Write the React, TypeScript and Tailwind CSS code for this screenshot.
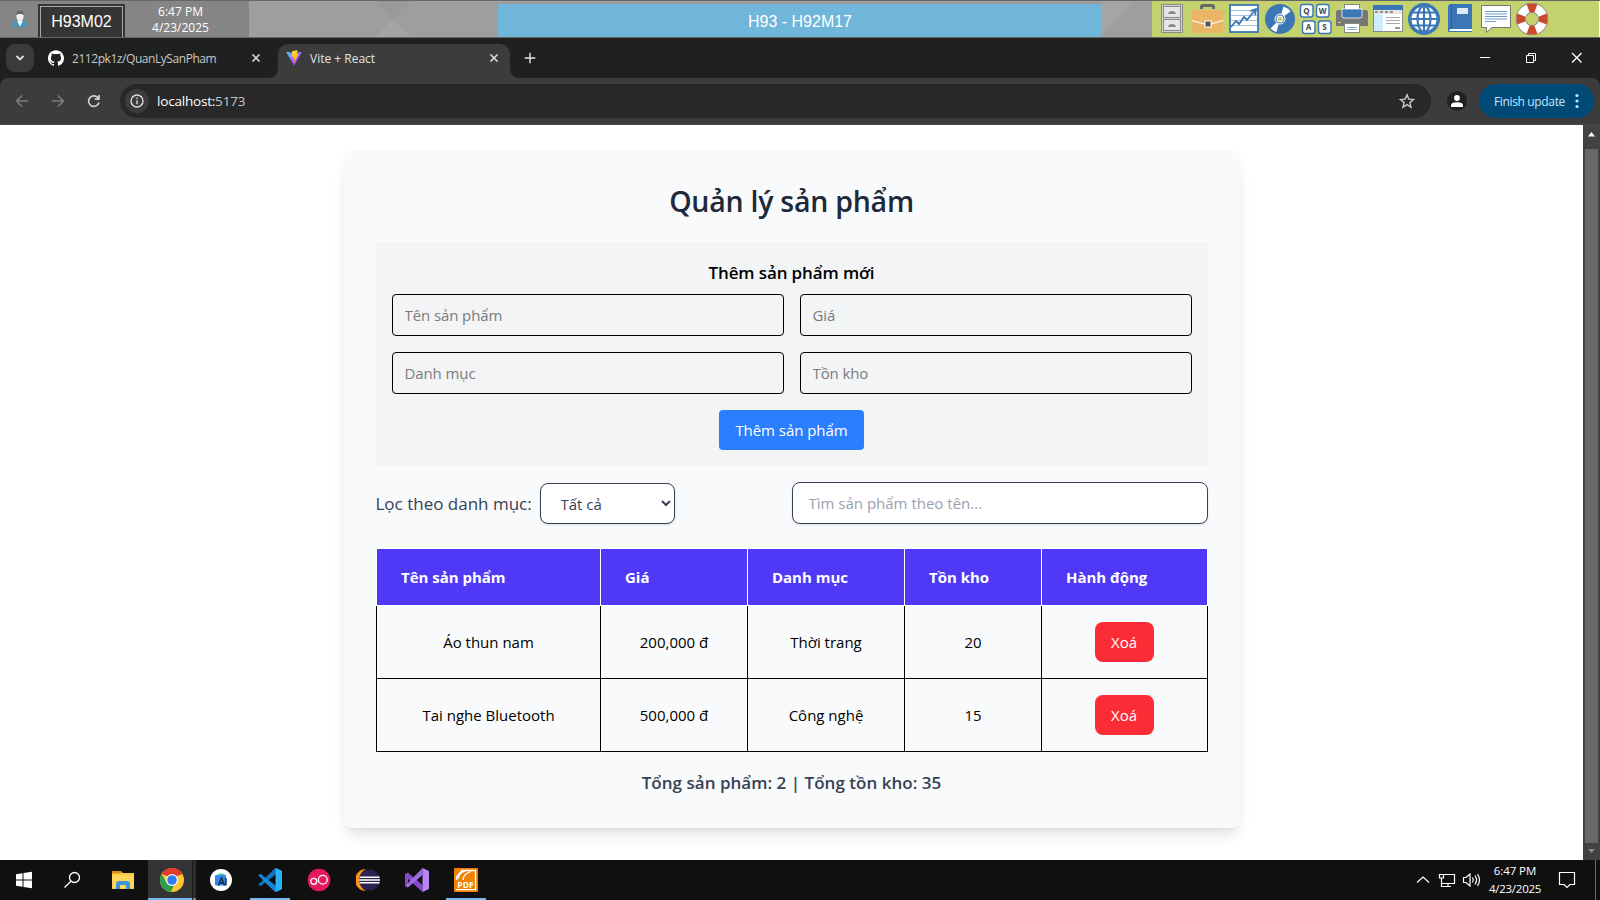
import type { ReactNode } from 'react';
import { SiGithub } from 'react-icons/si';

const KEYS: [number, number, string][] = [
  [2, 4, 'Q'],
  [18, 4, 'W'],
  [4, 20.5, 'A'],
  [20, 20.5, 'S'],
];

function ToolIcon({ children }: { children: ReactNode }) {
  return (
    <svg viewBox="0 1 36 36" className="h-9 w-9 shrink-0">
      {children}
    </svg>
  );
}

function ToolIcons() {
  return (
    <div className="flex h-9 w-[447px] bg-[#c3d26d] pl-0.5">
      <ToolIcon>
        <rect x="7.5" y="4.5" width="21" height="28" fill="#d0d0d0" stroke="#8b8b8b" />
        <rect x="9.5" y="6.5" width="17" height="11" fill="#e6e6e6" stroke="#8b8b8b" />
        <rect x="9.5" y="19.5" width="17" height="11" fill="#e6e6e6" stroke="#8b8b8b" />
        <path d="M14 14c0-4 8-4 8 0zM14 27c0-4 8-4 8 0z" fill="#8b8b8b" />
      </ToolIcon>
      <ToolIcon>
        <path d="M11.500 9V7q0-1.500 1.500-1.500h9q1.500 0 1.500 1.500v2" fill="none" stroke="#666" strokeWidth="3" />
        <rect x="2" y="10" width="31" height="23" fill="#ebb566" />
        <path d="M2 20.500L14 24h7l12-3.500" fill="none" stroke="#fff" strokeWidth="1.200" />
        <rect x="15" y="21" width="6" height="6" fill="#555" stroke="#fff" />
      </ToolIcon>
      <ToolIcon>
        <rect x="4" y="5" width="28" height="27" fill="#fff" stroke="#3b77b5" strokeWidth="1.800" />
        <path d="M5 10.500h26M5 15.500h26M5 20.500h26M5 25.500h26" stroke="#a8c4de" />
        <path d="M5 27l5-6 3 3 5-7 3 3 8-10M24 11l6-2-1 6" fill="none" stroke="#3b77b5" strokeWidth="1.800" />
      </ToolIcon>
      <ToolIcon>
        <circle cx="18" cy="19" r="15" fill="#3b77b5" />
        <path d="M18 19L21.500 6.500q4.500 1.500 7 5zM18 19L8.500 28.500q3 3 6 3.500z" fill="#fff" />
        <circle cx="18" cy="19" r="5" fill="#3b77b5" stroke="#fff" strokeWidth="1" />
        <circle cx="18" cy="19" r="2.800" fill="#c3d26d" stroke="#fff" strokeWidth="1.200" />
      </ToolIcon>
      <ToolIcon>
        {KEYS.map(([x, y, k]) => (
          <g key={k}>
            <rect x={x + 0.5} y={y + 0.5} width="12.500" height="12.500" rx="2.500" fill="#fff" stroke="#3b77b5" strokeWidth="1.400" />
            <text x={x + 6.5} y={y + 9.5} textAnchor="middle" className="fill-[#444] font-['Open_Sans',sans-serif] text-[8px] font-bold">
              {k}
            </text>
          </g>
        ))}
      </ToolIcon>
      <ToolIcon>
        <path d="M2 12q0-2 2-2h28q2 0 2 2v14H2z" fill="#777" />
        <rect x="10.500" y="4.500" width="15" height="8" fill="#fff" stroke="#888" />
        <path d="M8 9h20v7q0 2-2 2H10q-2 0-2-2z" fill="#3b77b5" stroke="#fff" strokeWidth=".8" />
        <rect x="10.500" y="23.500" width="15" height="9" fill="#fff" stroke="#888" />
        <path d="M13 27.500h10M13 29.500h10" stroke="#8fb0d0" />
        <path d="M4 22.500h3" stroke="#c3d26d" />
      </ToolIcon>
      <ToolIcon>
        <rect x="3.500" y="5.500" width="29" height="26" fill="#fff" stroke="#888" />
        <rect x="3" y="5" width="30" height="5" fill="#3b77b5" />
        <rect x="4" y="10" width="28" height="4" fill="#e6e6e6" />
        <path d="M5 12h3M10 12h3M15 12h3M20 12h3" stroke="#777" strokeWidth="1.600" />
        <rect x="4" y="14.500" width="9" height="16.500" fill="#cdebfd" />
        <path d="M16 17.500h14M16 20.500h14M16 23.500h14" stroke="#aaa" />
        <path d="M25 28h5" stroke="#999" strokeWidth="2" />
      </ToolIcon>
      <ToolIcon>
        <circle cx="18" cy="19" r="16" fill="#3b77b5" />
        <circle cx="18" cy="19" r="12.500" fill="#fff" />
        <g fill="none" stroke="#3b77b5" strokeWidth="2.200">
          <ellipse cx="18" cy="19" rx="6.500" ry="13" />
          <path d="M18 6v26M5 19h26M7 12.500h22M7 25.500h22" />
        </g>
      </ToolIcon>
      <ToolIcon>
        <path d="M8 4h22v28H6V6z" fill="#3b77b5" />
        <path d="M9.500 4v25" stroke="#2d5f95" />
        <path d="M7 31l1.500-2H30v2z" fill="#fff" />
        <rect x="15" y="8" width="11" height="6" fill="#dfe9f3" />
      </ToolIcon>
      <ToolIcon>
        <path d="M3.500 5.500h29v22H14l-5.500 5v-5h-5z" fill="#fff" stroke="#777" />
        <path d="M7 11.500h22M7 14h22M7 16.500h22M7 19h22M7 21.500h11" stroke="#6f9dcb" />
      </ToolIcon>
      <ToolIcon>
        <circle cx="18" cy="19" r="11.200" fill="none" stroke="#777" strokeWidth="10" />
        <circle cx="18" cy="19" r="11.200" fill="none" stroke="#fff" strokeWidth="8.600" />
        <circle cx="18" cy="19" r="11.200" fill="none" stroke="#cb4a2e" strokeWidth="8.800" pathLength="80" strokeDasharray="9 11" strokeDashoffset="4.500" />
      </ToolIcon>
    </div>
  );
}

function SessionBar() {
  return (
    <div className="flex h-[38px] shrink-0 border-t border-b border-[#666]">
      <div className="flex h-full w-[249px] bg-[#858585]">
        <div className="flex w-[38px] items-center justify-center pl-0.5">
          <svg viewBox="0 0 16 18" className="h-[18px] w-4">
            <path d="M0 17q0-6 5-6.500h6q5 .5 5 6.500z" fill="#4796bd" />
            <path d="M5 10.500L8 16.500l3-6z" fill="#fff" />
            <ellipse cx="8" cy="6" rx="3.600" ry="4.500" fill="#f1f1f1" />
            <path d="M4 5q0-4.500 4-4.500T12 5q-4-2-8 0z" fill="#666" />
          </svg>
        </div>
        <div className="mt-[3px] w-[87px] bg-[#353535] p-0.5 pb-0">
          <div className="flex h-full items-center justify-center border border-b-0 border-[#a8a8a8] font-['Liberation_Sans',sans-serif] text-base leading-none text-white">
            H93M02
          </div>
        </div>
        <div className="flex flex-1 flex-col items-center pt-[3px] pr-[13px] text-xs leading-4 text-white">
          <span>6:47 PM</span>
          <span>4/23/2025</span>
        </div>
      </div>
      <div className="flex h-9 w-[903px] bg-[#9e9e9e]">
        <div className="flex w-[249px]">
          <svg viewBox="0 0 249 36" className="h-9 w-[249px]">
            <path d="M126 0h36l-18 18z" fill="#999" />
            <path d="M144 18l18 18h-36z" fill="#a4a4a4" />
          </svg>
        </div>
        <div className="mt-[3px] flex h-[33px] w-[604px] items-center justify-center bg-[#70b6da] pt-0.5 font-['Liberation_Sans',sans-serif] text-base text-white">
          H93 - H92M17
        </div>
        <svg viewBox="0 0 50 36" className="h-9 w-[50px]">
          <path d="M0 0h31L0 34z" fill="#a5a5a5" />
        </svg>
      </div>
      <ToolIcons />
    </div>
  );
}

function CloseX({ className }: { className: string }) {
  return (
    <svg viewBox="0 0 10 10" className={className} fill="none" stroke="currentColor">
      <path d="M1.500 1.500l7 7M8.500 1.500l-7 7" strokeWidth="1.500" />
    </svg>
  );
}

function TabStrip() {
  return (
    <div className="flex h-10 shrink-0 bg-[#1f2120] text-[#e3e3e3]">
      <div className="flex w-[38px] pt-1.5 pl-1.5">
        <div className="flex h-7 w-7 items-center justify-center rounded-[9px] bg-[#3a3b3b]">
          <svg viewBox="0 0 10 10" className="h-2.5 w-2.5" fill="none" stroke="currentColor" strokeWidth="1.800">
            <path d="M1.500 3L5 6.500 8.500 3" />
          </svg>
        </div>
      </div>
      <div className="flex h-10 w-[230px] items-center pl-2.5">
        <SiGithub className="h-4 w-4 text-white" />
        <span className="mt-0.5 ml-2 text-xs tracking-[-0.44px] text-[#c7c7c7]">2112pk1z/QuanLySanPham</span>
        <div className="flex-1" />
        <CloseX className="mr-[7px] h-2.5 w-2.5" />
      </div>
      <div className="flex items-end">
        <svg viewBox="0 0 10 10" className="h-2.5 w-2.5">
          <path d="M10 0v10H0Q10 10 10 0z" fill="#3c3c3c" />
        </svg>
        <div className="flex h-[34px] w-[232px] items-center rounded-t-[10px] bg-[#3c3c3c] pr-[11px] pb-1.5 pl-2">
          <svg viewBox="0 0 410 404" className="h-4 w-4">
            <defs>
              <linearGradient id="shield" x1="6" y1="33" x2="235" y2="344" gradientUnits="userSpaceOnUse">
                <stop stopColor="#41D1FF" />
                <stop offset="1" stopColor="#BD34FE" />
              </linearGradient>
              <linearGradient id="bolt" x1="194" y1="9" x2="236" y2="293" gradientUnits="userSpaceOnUse">
                <stop stopColor="#FFEA83" />
                <stop offset=".08" stopColor="#FFDD35" />
                <stop offset="1" stopColor="#FFA800" />
              </linearGradient>
            </defs>
            <path fill="url(#shield)" d="M399.641 59.525l-183.998 329.020c-3.799 6.793-13.559 6.833-17.415.073L10.582 59.556C6.380 52.190 12.680 43.267 21.028 44.759l184.195 32.924c1.175.21 2.378.208 3.553-.006l180.343-32.870c8.320-1.517 14.649 7.337 10.522 14.718z" />
            <path fill="url(#bolt)" d="M292.965 1.574L156.801 28.255c-2.238.439-3.910 2.333-4.045 4.609l-8.376 141.464c-.197 3.332 2.863 5.918 6.115 5.168l37.910-8.749c3.547-.818 6.752 2.306 6.023 5.873l-11.263 55.153c-.758 3.712 2.727 6.886 6.352 5.785l23.415-7.114c3.630-1.102 7.118 2.081 6.350 5.796l-17.899 86.633c-1.120 5.419 6.088 8.374 9.094 3.728l2.008-3.103 110.954-221.428c1.858-3.707-1.346-7.935-5.418-7.150l-39.022 7.532c-3.667.707-6.787-2.708-5.752-6.296l25.469-88.291c1.036-3.594-2.095-7.012-5.766-6.293z" />
          </svg>
          <span className="mt-0.5 ml-2 text-xs">Vite + React</span>
          <div className="flex-1" />
          <CloseX className="h-2.5 w-2.5" />
        </div>
        <svg viewBox="0 0 10 10" className="h-2.5 w-2.5">
          <path d="M0 0v10h10Q0 10 0 0z" fill="#3c3c3c" />
        </svg>
      </div>
      <svg viewBox="0 0 20 20" className="mt-2.5 h-5 w-5" stroke="currentColor" strokeWidth="1.400">
        <path d="M10 4.700v10.600M4.700 10h10.600" />
      </svg>
      <div className="flex-1" />
      <svg viewBox="0 0 120 40" className="h-10 w-[120px]" fill="none" stroke="#fff">
        <path d="M0 19.500h10M46.500 17.500h7v7h-7zM48.500 17.500v-2h7v7h-2" />
        <path d="M92 15l9.500 9.500M101.500 15L92 24.500" strokeWidth="1.300" />
      </svg>
    </div>
  );
}

function AddressBar() {
  return (
    <div className="flex h-[47px] shrink-0 bg-[#1f2120]">
      <div className="flex h-[47px] w-full items-center rounded-t-[8px] border-b border-[#464646] bg-[#3c3c3c]">
        <svg viewBox="0 0 120 34" className="h-[34px] w-[120px]" fill="none" strokeWidth="1.600">
          <path d="M28 17H17M22 11.500L16.500 17l5.500 5.500M52 17h11M58 11.500l5.500 5.500-5.500 5.500" stroke="#7c7c7c" />
          <path d="M98.500 14.500A5.300 5.300 0 1 0 99 18.500M99 11v4.200h-4.200" stroke="#d0d0d0" strokeWidth="1.700" />
        </svg>
        <div className="flex h-[34px] w-[1311px] items-center rounded-full bg-[#282828] pr-4 pl-[5px]">
          <div className="flex h-6 w-6 items-center justify-center rounded-full bg-[#3c3c3c]">
            <svg viewBox="0 0 14 14" className="h-3.5 w-3.5" fill="none" stroke="#e3e3e3" strokeWidth="1.300">
              <circle cx="7" cy="7" r="6" />
              <path d="M7 6.200v4M7 3.600v1.400" />
            </svg>
          </div>
          <span className="ml-2 text-[13.500px] tracking-[-0.2px] text-[#c7c7c7]">
            <span className="text-white">localhost:</span>5173
          </span>
          <div className="flex-1" />
          <svg viewBox="0 0 16 16" className="h-4 w-4" fill="none" stroke="#c7c7c7" strokeWidth="1.400">
            <path d="M8 1.800l1.800 4.300 4.700.4-3.600 3.100 1.100 4.600L8 11.700l-4 2.500 1.100-4.600-3.600-3.100 4.700-.4z" />
          </svg>
        </div>
        <div className="ml-4 flex h-5 w-5 items-center justify-center rounded-full bg-[#1f2020]">
          <svg viewBox="0 0 12 12" className="h-3 w-3 fill-white">
            <circle cx="6" cy="3" r="2.900" />
            <path d="M0 12v-1.500Q0 7.200 6 7.200t6 3.300V12z" />
          </svg>
        </div>
        <div className="ml-3 flex h-[34px] w-[115px] items-center rounded-full bg-[#004a77] pl-[15px] text-xs tracking-[-0.35px] text-[#c2e7ff]">
          <span className="mt-px">Finish update</span>
          <div className="flex-1" />
          <svg viewBox="0 0 4 16" className="mr-[15px] h-4 w-1 fill-[#c2e7ff]">
            <circle cx="2" cy="2.500" r="1.600" />
            <circle cx="2" cy="8" r="1.600" />
            <circle cx="2" cy="13.500" r="1.600" />
          </svg>
        </div>
      </div>
    </div>
  );
}

const FIELDS = ['Tên sản phẩm', 'Giá', 'Danh mục', 'Tồn kho'];
const HEADS = ['Tên sản phẩm', 'Giá', 'Danh mục', 'Tồn kho', 'Hành động'];
const ROWS = [
  ['Áo thun nam', '200,000 đ', 'Thời trang', '20'],
  ['Tai nghe Bluetooth', '500,000 đ', 'Công nghệ', '15'],
];

function ProductPage() {
  return (
    <div className="flex flex-1 flex-col items-center bg-white pt-[25px]">
      <div className="h-[678px] w-4xl rounded-lg bg-gray-50 p-8 shadow-lg">
        <h1 className="mb-6 pt-0.5 text-center text-[28.500px] leading-[34px] font-semibold tracking-[-0.25px] text-gray-800">
          Quản lý sản phẩm
        </h1>
        <div className="rounded bg-gray-100 p-4">
          <h2 className="mb-2 pt-px text-center text-[17px] leading-[27px] font-semibold tracking-[-0.12px] text-black">
            Thêm sản phẩm mới
          </h2>
          <div className="grid grid-cols-2 gap-4">
            {FIELDS.map((f) => (
              <input
                key={f}
                placeholder={f}
                className="h-[42px] rounded border border-black px-3 text-[15px] tracking-[-0.1px] placeholder:text-[#7a7b7b]"
              />
            ))}
          </div>
          <div className="mt-4 flex justify-center">
            <button className="h-10 w-[145px] rounded bg-[#2b7fff] text-[15px] tracking-[-0.05px] text-white">
              Thêm sản phẩm
            </button>
          </div>
        </div>
        <div className="mt-4 flex h-[42px] items-center justify-between">
          <div className="flex items-center">
            <label className="w-[164px] pt-px text-[17px] whitespace-nowrap text-gray-700">
              Lọc theo danh mục:
            </label>
            <select className="mt-px h-[41px] w-[135px] rounded-lg border border-gray-700 bg-white px-4 text-[15px] text-gray-700 shadow-sm">
              <option>Tất cả</option>
            </select>
          </div>
          <input
            placeholder="Tìm sản phẩm theo tên..."
            className="h-[42px] w-1/2 rounded-lg border border-gray-700 bg-white px-4 text-[15px] shadow-sm placeholder:text-gray-400"
          />
        </div>
        <table className="mt-6 w-full table-fixed border-collapse text-[15px] leading-6 text-black">
          <colgroup>
            <col className="w-[224px]" />
            <col className="w-[147px]" />
            <col className="w-[157px]" />
            <col className="w-[137px]" />
            <col className="w-[166px]" />
          </colgroup>
          <thead>
            <tr className="bg-indigo-600 text-left text-white">
              {HEADS.map((h) => (
                <th key={h} className="h-[57px] border border-white pr-6 pl-[24.500px] font-bold tracking-[-0.02px]">
                  {h}
                </th>
              ))}
            </tr>
          </thead>
          <tbody>
            {ROWS.map((r) => (
              <tr key={r[0]} className="text-center">
                {r.map((c) => (
                  <td key={c} className="h-[73px] border border-black pr-6 pl-[25px]">
                    {c}
                  </td>
                ))}
                <td className="border border-black px-6">
                  <button className="h-10 w-[59px] rounded-lg bg-red-500 align-middle text-white">Xoá</button>
                </td>
              </tr>
            ))}
          </tbody>
        </table>
        <p className="mt-[17px] text-center text-[17px] leading-7 font-semibold tracking-[0.02px] text-gray-700">
          Tổng sản phẩm: 2 | Tổng tồn kho: 35
        </p>
      </div>
    </div>
  );
}

function Scrollbar() {
  return (
    <div className="flex w-[17px] flex-col items-center bg-[#424242]">
      <svg viewBox="0 0 17 24" className="h-6 w-[17px]">
        <path d="M5 11.500L8.500 7l3.500 4.500z" fill="#fff" />
      </svg>
      <div className="w-[13px] flex-1 bg-[#686868]" />
      <svg viewBox="0 0 17 17" className="h-[17px] w-[17px]">
        <path d="M5 6l3.500 4L12 6z" fill="#8a8a8a" />
      </svg>
    </div>
  );
}

function TaskIcon({ active = false, children }: { active?: boolean; children: ReactNode }) {
  return (
    <div className="flex w-[49px] flex-col items-center">
      <div className="flex h-[38px] items-center pt-0.5">
        <svg viewBox="0 0 24 24" className="h-6 w-6">
          {children}
        </svg>
      </div>
      <div className={active ? 'h-0.5 w-10 bg-[#76b9ed]' : 'h-0.5 w-10'} />
    </div>
  );
}

function Taskbar() {
  return (
    <div className="flex h-10 shrink-0 bg-[#101010] text-white">
      <svg viewBox="0 0 98 40" className="h-10 w-[98px]">
        <path d="M16 14.200l6.500-1v6.300H16zM23.500 13l8.500-1.200v7.700h-8.500zM16 20.500h6.500v6.300l-6.500-1zM23.500 20.500H32v7.700L23.500 27z" fill="#fff" />
        <circle cx="74.500" cy="17.500" r="5" fill="none" stroke="#fff" strokeWidth="1.300" />
        <path d="M71 21.200L64.500 27.500" stroke="#fff" strokeWidth="1.300" />
      </svg>
      <TaskIcon>
        <path d="M1 3h9l1.500 2H23v16H1z" fill="#f9c846" />
        <path d="M1 3h9v2.500H1z" fill="#d9920f" />
        <path d="M1 7h22v13H1z" fill="#ffd65c" />
        <path d="M5 21v-5q0-3 3-3h8q3 0 3 3v5h-4v-4H9v4z" fill="#3d94dd" />
      </TaskIcon>
      <div className="flex w-[49px] pl-px">
        <div className="flex w-11 flex-col items-center bg-[#343434]">
          <div className="flex h-[38px] items-center pt-0.5 pl-1">
            <svg viewBox="0 0 24 24" className="h-6 w-6">
              <circle cx="12" cy="12" r="12" fill="#fcc934" />
              <path d="M1.600 6A12 12 0 0 1 22.400 6L12 10z" fill="#e33b2e" />
              <path d="M1.600 6l5.200 9 5.200 3 2-1-3 7A12 12 0 0 1 1.600 6z" fill="#2c9f4b" />
              <path d="M17.200 15L12 24h-.5L14 17z" fill="#fcc934" />
              <circle cx="12" cy="12" r="6" fill="#fff" />
              <circle cx="12" cy="12" r="4.800" fill="#2f7cf0" />
            </svg>
          </div>
          <div className="h-0.5 w-full bg-[#76b9ed]" />
        </div>
        <div className="flex w-1 flex-col justify-end border-l border-[#1c1c1c] bg-[#2b2b2b]">
          <div className="h-0.5 bg-[#5d92bb]" />
        </div>
      </div>
      <TaskIcon>
        <circle cx="12" cy="12" r="11" fill="#fff" />
        <path d="M8 7.500a4.500 3.500 0 0 1 8.500 0z" fill="#3ddc84" />
        <rect x="6" y="7" width="11" height="10.500" rx="1" fill="#3b83f0" />
        <path d="M9.500 17.500l3-7.500 3 7.500M10.500 15h4M17 10v7.500" fill="none" stroke="#073042" strokeWidth="1.400" />
      </TaskIcon>
      <TaskIcon active>
        <path d="M17.500 0L24 3v18l-6.500 3L5 12.500z" fill="#1f9cf0" />
        <path d="M17.500 0L24 3v18l-6.500 3z" fill="#2bb1f7" />
        <path d="M17.500 6.500L2.300 18.300.3 16.500 17.500 0z" fill="#0f75bd" />
        <path d="M17.500 17.500L2.300 5.700.3 7.500 17.500 24z" fill="#1487d4" />
        <path d="M17.500 6.500v11L10.500 12z" fill="#101010" />
      </TaskIcon>
      <TaskIcon>
        <circle cx="12" cy="12" r="11.300" fill="#e5195f" />
        <circle cx="6.800" cy="13.300" r="3" fill="none" stroke="#fff" strokeWidth="1.300" />
        <circle cx="15.800" cy="11.800" r="4.400" fill="none" stroke="#fff" strokeWidth="1.300" />
      </TaskIcon>
      <TaskIcon>
        <path d="M10 1A11 11 0 0 0 10 23 12.500 12.500 0 0 1 10 1z" fill="#f7941e" />
        <circle cx="13.500" cy="12" r="10.500" fill="#2c2255" />
        <path d="M3.500 9.200h20M3 12h21M3.500 14.800h20" stroke="#fff" strokeWidth="1.500" />
      </TaskIcon>
      <TaskIcon>
        <path d="M0 6l3-1.500L17.500 17v7L3 11v4.500L0 18z" fill="#8648c9" />
        <path d="M17.500 0v7L3 19.500 0 18l3-3z" fill="#a06be0" />
        <path d="M17.500 0L24 3v18l-6.500 3z" fill="#b684f5" />
      </TaskIcon>
      <TaskIcon active>
        <rect width="24" height="24" rx="1" fill="#f08000" />
        <path d="M2.500 12.500V9L8 2.500h13.500v19h-19v-1M4 11Q5 4.500 11 3M9 12q0-6 8-8.500" fill="none" stroke="#fff" strokeWidth="1.300" />
        <rect x="2" y="12" width="18.500" height="9" fill="#f08000" />
        <text x="11.500" y="20" textAnchor="middle" className="fill-white font-['Open_Sans',sans-serif] text-[8.500px] font-bold">
          PDF
        </text>
      </TaskIcon>
      <div className="flex-1" />
      <svg viewBox="0 0 80 40" className="h-10 w-20" fill="none" stroke="#fff" strokeWidth="1.200">
        <path d="M9 22.500L15 17l6 5.500" />
        <path d="M36 14.500h10.500v9H34M31.500 14.500h4v3.500h-4zM33.500 18v8.500M33 26.500h10M40 23.500v3" />
        <path d="M55.500 17.500h2.500l4-3.500v12l-4-3.500h-2.500zM64.500 17.500q1.500 2.500 0 5M67 15.500q3 4.500 0 9M69.500 14q4 6 0 12" />
      </svg>
      <div className="flex w-[54px] flex-col items-center pt-0.5 text-[11.500px] leading-[18px]">
        <span className="tracking-[-0.1px]">6:47 PM</span>
        <span className="tracking-[-0.25px]">4/23/2025</span>
      </div>
      <svg viewBox="0 0 58 40" className="h-10 w-[58px]" fill="none" stroke="#fff" strokeWidth="1.200">
        <path d="M17.500 12.500h15v12h-4.500l-3 3-3-3h-4.500z" />
        <path d="M53.500 0v40" stroke="#6a6a6a" strokeWidth="1" />
      </svg>
    </div>
  );
}

export default function App() {
  return (
    <div className="flex h-[900px] w-[1600px] flex-col overflow-hidden font-['Open_Sans','Noto_Sans',sans-serif]">
      <SessionBar />
      <TabStrip />
      <AddressBar />
      <div className="flex min-h-0 flex-1">
        <ProductPage />
        <Scrollbar />
      </div>
      <Taskbar />
    </div>
  );
}
